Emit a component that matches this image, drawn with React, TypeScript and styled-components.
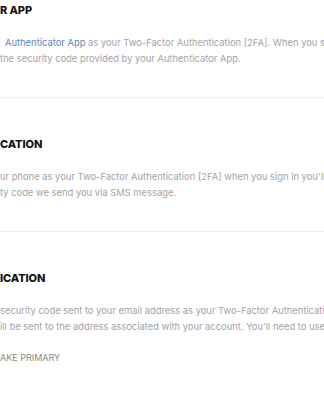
import React from "react";
import styled, { createGlobalStyle } from "styled-components";

const GlobalStyle = createGlobalStyle`
  html, body {
    margin: 0;
    padding: 0;
    background: #ffffff;
    overflow: hidden;
  }
  body {
    font-family: Inter, "Open Sans", Arial, sans-serif;
    -webkit-font-smoothing: antialiased;
  }
`;

const Page = styled.div`
  width: 324px;
  height: 400px;
  overflow: hidden;
  background: #ffffff;
`;

const Section = styled.section<{ last?: boolean }>`
  padding: 36px 0 30px;
  border-bottom: ${(p) => (p.last ? "none" : "1px solid #eeeeee")};

  &:first-child {
    padding-top: 0;
  }
`;

const Title = styled.h3`
  margin: 0;
  font-size: 11px;
  line-height: 20px;
  font-weight: 800;
  letter-spacing: -0.1px;
  color: #141414;
  white-space: nowrap;
`;

const Body = styled.div`
  margin-top: 15px;
  font-size: 9.4px;
  line-height: 16px;
  color: #a3a3a3;
`;

const Line = styled.div<{ $indent?: number }>`
  white-space: nowrap;
  padding-left: ${(p) => p.$indent ?? 0}px;
`;

const Link = styled.span`
  color: #5b88b6;
`;

const TextButton = styled.button`
  margin-top: 15px;
  padding: 0;
  border: none;
  background: none;
  font-family: inherit;
  font-size: 9px;
  line-height: 16px;
  color: #8a8a8a;
  cursor: pointer;
`;

export default function App() {
  return (
    <>
      <GlobalStyle />
      <Page>
        <Section>
          <Title>R APP</Title>
          <Body>
            <Line $indent={5}>
              <Link>Authenticator App</Link> as your Two-Factor Authentication [2FA]. When you sign in
            </Line>
            <Line>the security code provided by your Authenticator App.</Line>
          </Body>
        </Section>
        <Section>
          <Title>CATION</Title>
          <Body>
            <Line>ur phone as your Two-Factor Authentication [2FA] when you sign in you'll be</Line>
            <Line>ty code we send you via SMS message.</Line>
          </Body>
        </Section>
        <Section last>
          <Title>ICATION</Title>
          <Body>
            <Line>security code sent to your email address as your Two-Factor Authentication</Line>
            <Line>ill be sent to the address associated with your account. You'll need to use</Line>
          </Body>
          <TextButton>AKE PRIMARY</TextButton>
        </Section>
      </Page>
    </>
  );
}
